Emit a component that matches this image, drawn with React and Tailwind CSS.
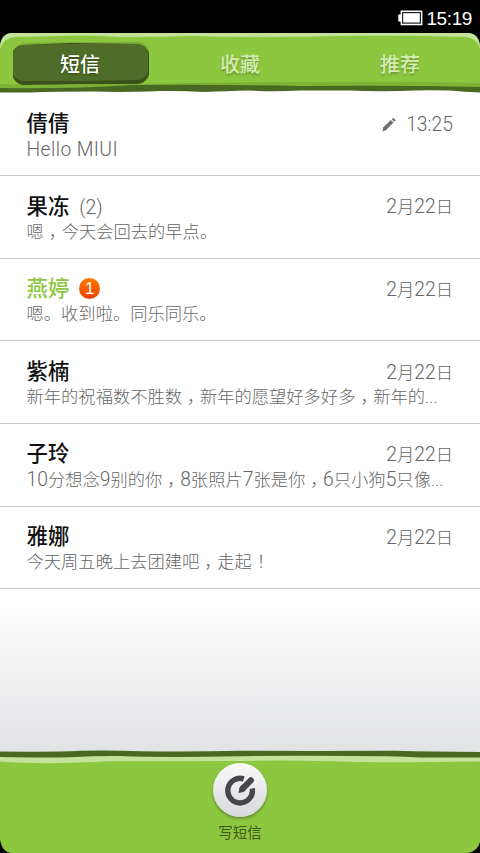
import clsx from 'clsx'

const tabs = ['短信', '收藏', '推荐']

const threads = [
  { name: '倩倩', text: 'Hello MIUI', date: '13:25', draft: true },
  { name: '果冻', text: '嗯，今天会回去的早点。', date: '2月22日', count: 2 },
  { name: '燕婷', text: '嗯。收到啦。同乐同乐。', date: '2月22日', unread: 1 },
  { name: '紫楠', text: '新年的祝福数不胜数，新年的愿望好多好多，新年的...', date: '2月22日' },
  { name: '子玲', text: '10分想念9别的你，8张照片7张是你，6只小狗5只像...', date: '2月22日' },
  { name: '雅娜', text: '今天周五晚上去团建吧，走起！', date: '2月22日' },
]

// latin runs are set larger than the Chinese around them,
// full-width ，and ！ sit in the middle of their cell
const Mixed = ({ text }) =>
  text.split(/([A-Za-z0-9: ]+|[，！])/).filter(Boolean).map((part, i) => {
    if (/^[，！]$/.test(part)) {
      return (
        <span key={i} className="inline-block ml-[5px] mr-[4.2px] [font-feature-settings:'halt']">{part}</span>
      )
    }
    return (
      <span key={i} className={clsx(/^[A-Za-z0-9]/.test(part) && 'text-[19.3px]')}>{part}</span>
    )
  })

const StatusBar = () => (
  <div className="h-[33px] shrink-0 flex items-center justify-end gap-px pr-2 pt-[3px] text-white">
    <svg width="27" height="16" viewBox="0 0 27 16">
      <path d="M2.6 .5H24.4V15.2H2.6V11.5H.3V4.5H2.6Z" fill="#fff" />
      <path d="M4 2H23V13.7H4Z" fill="#222" />
      <path d="M5.2 3.2H21.8V12.5H5.2Z" fill="#fff" />
    </svg>
    <span className="text-[19px] leading-none tracking-[-0.4px] font-['Liberation_Sans',sans-serif]">15:19</span>
  </div>
)

const Header = () => (
  <header className="relative h-[60px] shrink-0">
    <svg className="absolute inset-0" width="480" height="60" viewBox="0 0 480 60">
      <path d="M0 14H480V60H0Z" fill="#fff" />
      <path d="M0 48H480V59.5Q465 59 450 57.5Q420 57 400 58Q370 58.5 350 57.5L300 57.5Q275 59 250 57.5Q225 58 205 59Q180 57.5 160 58Q120 59.5 95 58.5Q55 58.5 30 59.5L0 59.5Z" fill="#476920" />
      <path d="M0 16Q0 0 13 0H467Q480 0 480 16V54Q400 52 300 53Q210 51 130 52Q70 56 0 55Z" fill="#7db236" />
      <path d="M0 16Q0 0 13 0H467Q480 0 480 16V50Q400 48 310 49Q210 49 130 51Q60 52 0 51Z" fill="#8dc740" />
      <path d="M0 16Q0 0 13 0H467Q480 0 480 16Q477 5 466 4Q400 2 340 3Q260 5 190 3Q150 4 120 4Q90 2 60 3L14 4Q4 5 0 16Z" fill="#c2e39a" />
      <path d="M14 17Q18 10 24 10L70 9L140 9Q149 12 149 19L149 44Q145 52 136 52L80 53L23 52Q13 49 13 43Z" fill="#7bad37" />
      <path d="M13 18Q17 12 24 12L70 10L139 11Q148 14 149 21L149 42Q145 51 136 51L80 51L22 52Q14 49 13 44Z" fill="#395219" />
      <path d="M13 18Q17 13 24 12L70 11L139 11Q148 14 148 21L148 39Q144 47 136 47L80 48L22 48Q14 46 13 41Z" fill="#4e6d29" />
    </svg>
    <nav className="relative grid grid-cols-3 h-full">
      {tabs.map((tab, i) => (
        <button
          key={tab}
          type="button"
          className={clsx(
            'pt-[3px] text-[20px] leading-[58px] font-medium',
            i === 0
              ? 'text-white [text-shadow:0_1px_2px_#2c4212]'
              : 'text-[#d3ecb0] [text-shadow:0_2px_2px_#6a972d]'
          )}
        >
          {tab}
        </button>
      ))}
    </nav>
  </header>
)

const Pencil = () => (
  <svg width="14" height="15" viewBox="0 0 14 15" fill="#707070">
    <path d="M.4 14.4L1.4 10.3L8.9 3L11.5 5.5L4.2 13Z" />
    <path d="M9.7 2.2L11.2 .8L13.8 3.3L12.3 4.7Z" />
  </svg>
)

const Thread = ({ name, text, date, count, unread, draft }) => (
  <li className="h-[82.6px] shrink-0 border-b border-[#c9c9c9] pl-[26.5px] pr-[27px] pt-[15.5px]">
    <div className="flex items-center h-[30px]">
      <span className={clsx('text-[21.4px] font-medium', unread ? 'text-[#8dc740]' : 'text-[#111]')}>
        {name}
      </span>
      {count && <span className="ml-2.5 pt-[2px] text-[19.5px] font-light text-[#666]">({count})</span>}
      {unread && (
        <span className="ml-2.5 -mt-[2px] size-[21px] rounded-full bg-linear-to-b from-[#ff7800] to-[#ee4000] text-white text-[17px] leading-[21px] text-center font-['Liberation_Sans',sans-serif]">
          {unread}
        </span>
      )}
      <span className="ml-auto flex items-center gap-[10px] pt-[1.5px] text-[17.3px] leading-6 font-light text-[#666]">
        {draft && <Pencil />}
        <span><Mixed text={date} /></span>
      </span>
    </div>
    <p className={clsx(
      'text-[17.3px] leading-[21px] font-light text-[#666] whitespace-nowrap',
      draft && 'tracking-[0.4px]'
    )}>
      <Mixed text={text} />
    </p>
  </li>
)

const Footer = () => (
  <footer className="relative h-[103px] shrink-0">
    <svg className="absolute inset-0" width="480" height="103" viewBox="0 0 480 103">
      <path d="M0 0H480V20H0Z" fill="#e2e3e5" />
      <path d="M0 85H480V103H0Z" fill="#000" />
      <path d="M0 1.6Q60 2 80 .8Q110 .2 140 1.2Q190 2.2 240 .8L310 1L395 .8Q430 1.8 480 2V20H0Z" fill="#476920" />
      <path d="M0 7Q40 7.8 70 7.3Q100 5.6 120 6Q160 7.6 240 6.3Q290 5.4 350 6Q390 6 420 7.4L480 7.4V20H0Z" fill="#c2e39a" />
      <path d="M0 11.5Q20 13 45 13.2Q80 13 110 11.3L240 11Q280 10 320 11Q380 13 430 12L480 11.5V92Q478 101 468 103H11Q2 102 0 90Z" fill="#8dc740" />
    </svg>
    <button type="button" className="relative mx-auto flex flex-col items-center pt-[13px]">
      <span className="size-[54px] rounded-full bg-linear-to-b from-[#fafafa] to-[#d8d8dc] shadow-[0_2px_3px_#4e7322aa] flex items-center justify-center">
        <svg width="32" height="32" viewBox="0 0 32 32" fill="none" stroke="#45474c">
          <path d="M19.8 4.9A12.3 12.3 0 1 0 28.2 14.4" strokeWidth="5.4" />
          <path d="M26.8 6.4L19.6 13.6" strokeWidth="6.2" strokeLinecap="round" />
          <path d="M17 11.5L22 16L19.5 18L14.6 19L15.4 13.7Z" fill="#45474c" stroke="none" />
        </svg>
      </span>
      <span className="mt-[7px] text-[14.5px] leading-5 text-[#3f591d]">写短信</span>
    </button>
  </footer>
)

export default function App() {
  return (
    <div className="w-[480px] h-[853px] overflow-hidden flex flex-col bg-black font-[Roboto,'Noto_Sans_CJK_SC',sans-serif]">
      <StatusBar />
      <Header />
      <ul className="flex-1 min-h-0 flex flex-col pt-[0.6px] bg-linear-to-b from-white from-77% to-[#e2e3e5]">
        {threads.map((thread) => (
          <Thread key={thread.name} {...thread} />
        ))}
      </ul>
      <Footer />
    </div>
  )
}
